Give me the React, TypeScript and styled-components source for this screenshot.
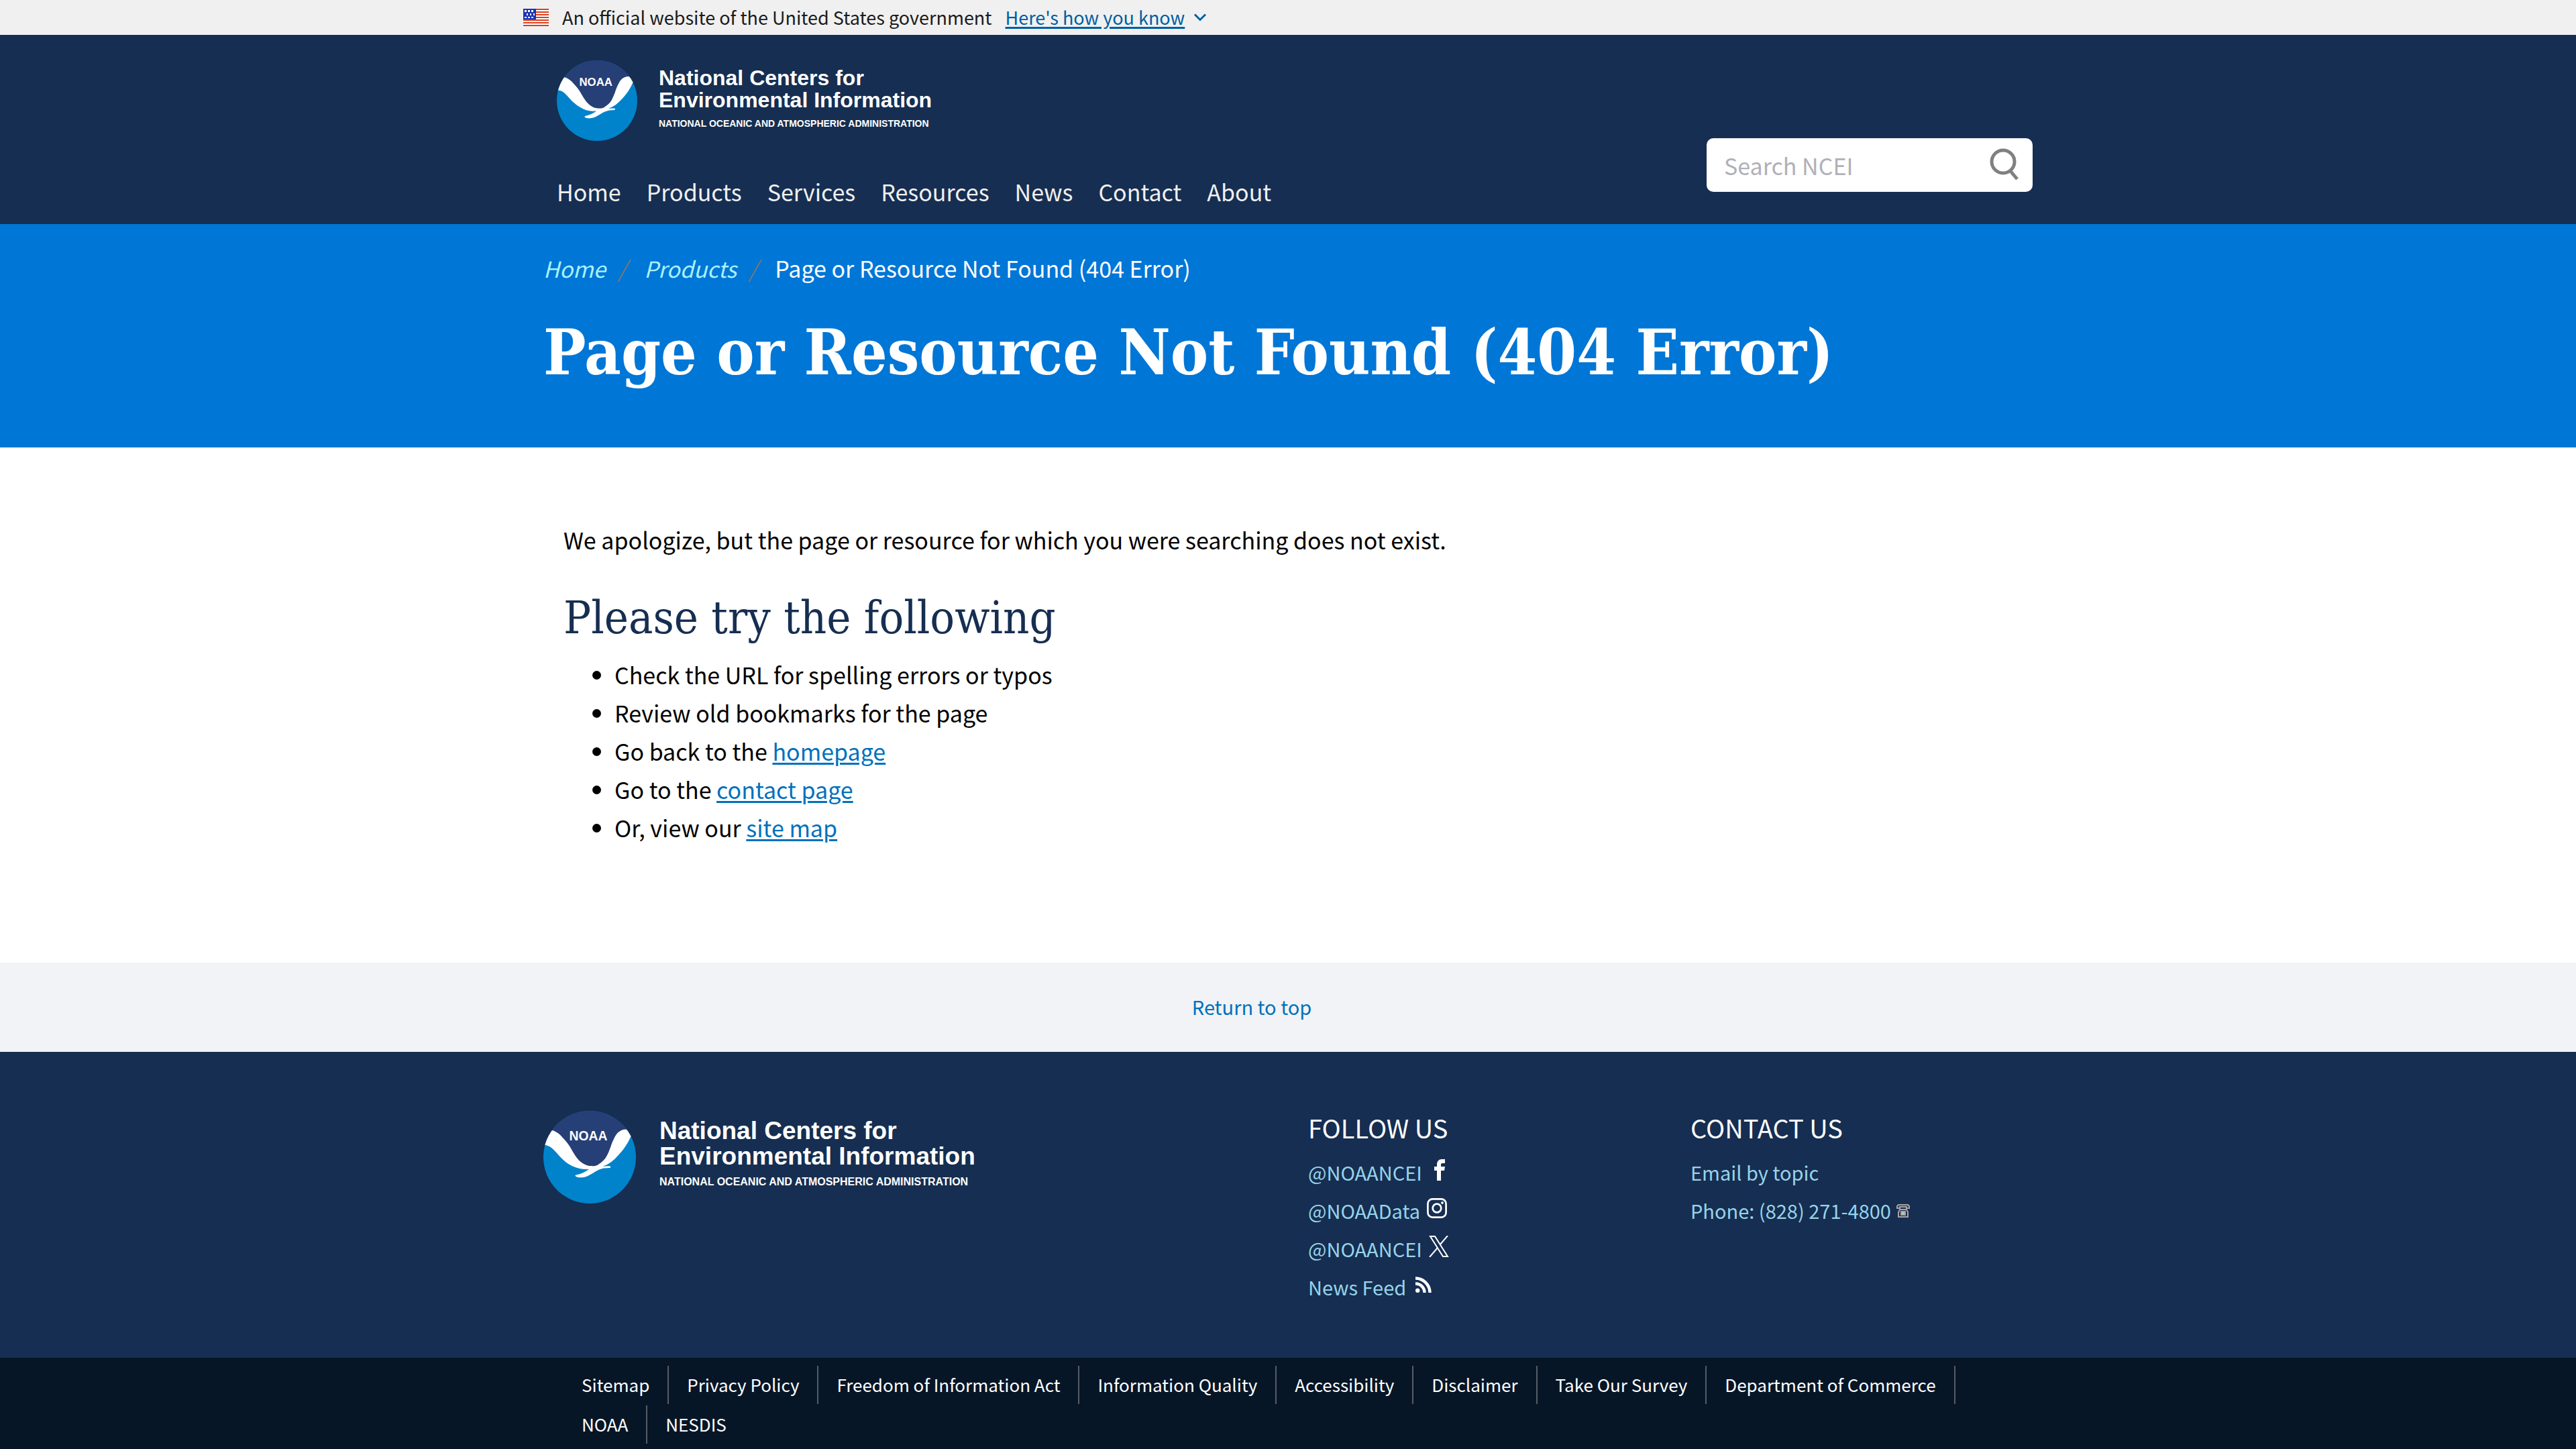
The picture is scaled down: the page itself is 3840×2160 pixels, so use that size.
import React from "react";
import styled, { createGlobalStyle } from "styled-components";

const SANS = `"Noto Sans CJK SC", "Noto Sans", sans-serif`;
const SERIF = `"DejaVu Serif Condensed", "DejaVu Serif", serif`;
const LOGO = `"Liberation Sans", Arial, sans-serif`;

const GlobalStyle = createGlobalStyle`
  *, *::before, *::after { box-sizing: border-box; }
  body {
    margin: 0;
    background: #fff;
    color: #000;
    font-family: ${SANS};
    font-size: 34px;
    line-height: 57px;
  }
  h1, h2, h3, p, ul, ol { margin: 0; padding: 0; }
`;

const Container = styled.div`
  width: 100%;
  max-width: 2280px;
  margin: 0 auto;
  padding: 0 30px;
`;

const GovBanner = styled.section`
  background: #f0f0f0;
  color: #1b1b1b;
`;
const GovInner = styled(Container)`
  display: flex;
  align-items: center;
  padding: 0;
  font-size: 27px;
  line-height: 52px;
`;
const Flag = styled.svg`
  width: 38px;
  height: 26px;
  margin-right: 20px;
`;
const GovButton = styled.button`
  display: flex;
  align-items: center;
  gap: 13px;
  margin: 0 0 0 20px;
  padding: 0;
  border: 0;
  background: none;
  color: #005ea2;
  font: inherit;
  cursor: pointer;
`;
const Underlined = styled.span`
  text-decoration: underline;
  text-underline-offset: 3px;
  text-decoration-thickness: 3px;
`;

const Header = styled.header`
  background: #162e51;
  color: #fff;
`;
const HeaderInner = styled(Container)`
  display: flex;
  justify-content: space-between;
  align-items: flex-end;
  padding-top: 38px;
`;
const HeaderLeft = styled.div`
  padding: 0 0 20px 20px;
`;
const LogoLink = styled.a<{ $large?: boolean }>`
  display: inline-flex;
  align-items: flex-start;
  gap: ${(p) => (p.$large ? "35px" : "32px")};
  color: #fff;
  text-decoration: none;
  font-family: ${LOGO};
  vertical-align: top;
`;
const Emblem = styled.svg<{ $large?: boolean }>`
  width: ${(p) => (p.$large ? "138px" : "120px")};
  height: ${(p) => (p.$large ? "138px" : "120px")};
`;
const LogoText = styled.span<{ $large?: boolean }>`
  display: flex;
  flex-direction: column;
  padding-top: ${(p) => (p.$large ? "11px" : "10px")};
  font-weight: 700;
  font-size: ${(p) => (p.$large ? "37px" : "32px")};
  line-height: ${(p) => (p.$large ? "38px" : "33px")};
`;
const LogoSub = styled.span<{ $large?: boolean }>`
  margin-top: ${(p) => (p.$large ? "8px" : "7px")};
  font-size: ${(p) => (p.$large ? "16px" : "14px")};
  line-height: 22px;
`;
const Nav = styled.ul`
  display: flex;
  gap: 38px;
  margin-top: 47px;
  list-style: none;
`;
const NavLink = styled.a`
  color: #f0f0f0;
  text-decoration: none;
`;
const SearchForm = styled.form`
  display: flex;
  align-items: center;
  width: 486px;
  height: 80px;
  margin-bottom: 48px;
  padding: 0 20px 0 26px;
  border-radius: 10px;
  background: #fff;
`;
const SearchInput = styled.input`
  flex: 1;
  min-width: 0;
  padding: 0;
  border: 0;
  outline: 0;
  background: none;
  color: #1b1b1b;
  font: inherit;
  &::placeholder { color: #b0b0b8; opacity: 1; }
`;
const SearchButton = styled.button`
  display: flex;
  padding: 0;
  border: 0;
  background: none;
  cursor: pointer;
`;

const Hero = styled.section`
  padding: 37px 0 82px;
  background: #0076d6;
  color: #fff;
`;
const Crumbs = styled.ol`
  display: flex;
  list-style: none;
`;
const Crumb = styled.li`
  &:not(:last-child)::after {
    content: "/";
    margin: 0 26px 0 18px;
    color: #71767a;
    font-style: italic;
  }
`;
const CrumbLink = styled.a`
  color: #a8f2ff;
  font-size: 33px;
  font-style: italic;
  text-decoration: none;
`;
const Title = styled.h1`
  margin-top: 36px;
  font-family: ${SERIF};
  font-size: 94px;
  line-height: 120px;
  font-weight: 700;
`;

const Body = styled(Container)`
  padding: 109px 60px 173px;
`;
const Subtitle = styled.h2`
  margin: 48px 0 16px;
  color: #162e51;
  font-family: ${SERIF};
  font-size: 68px;
  line-height: 80px;
  font-weight: 400;
`;
const Tips = styled.ul`
  padding-left: 76px;
`;
const TextLink = styled.a`
  color: #0071bc;
  text-decoration: underline;
  text-underline-offset: 3px;
  text-decoration-thickness: 3px;
`;

const ReturnBand = styled.div`
  padding: 37px 0 39px;
  background: #f1f3f6;
  font-size: 29px;
`;
const ReturnInner = styled(Container)`
  padding-right: 138px;
  text-align: center;
`;
const ReturnLink = styled.a`
  color: #0071bc;
  text-decoration: none;
`;

const Footer = styled.footer`
  background: #162e51;
  color: #fff;
`;
const FooterGrid = styled(Container)`
  display: grid;
  grid-template-columns: 1140px 570px 1fr;
  padding-top: 84px;
  padding-bottom: 77px;
`;
const FooterBrand = styled.div`
  padding-top: 4px;
`;
const FooterHeading = styled.h3`
  margin-bottom: 10px;
  font-size: 38px;
  line-height: 57px;
  font-weight: 400;
`;
const FooterList = styled.ul`
  list-style: none;
  font-size: 29px;
`;
const FooterItem = styled.li<{ $gap?: number; $lift?: number }>`
  display: flex;
  align-items: center;
  gap: ${(p) => p.$gap ?? 8}px;
  height: 57px;
  & > svg { margin-bottom: ${(p) => p.$lift ?? 8}px; }
`;
const FooterLink = styled.a`
  color: #97d4ea;
  text-decoration: none;
`;

const Legal = styled.div`
  padding: 12px 0 8px;
  background: #071627;
`;
const LegalList = styled.ul`
  display: flex;
  flex-wrap: wrap;
  row-gap: 2px;
  width: 100%;
  max-width: 2160px;
  margin: 0 auto;
  list-style: none;
  font-size: 26px;
`;
const LegalItem = styled.li`
  height: 57px;
  padding: 0 27px;
  line-height: 55px;
  border-right: 2px solid #565c65;
  &:last-child { border-right: 0; }
`;
const LegalLink = styled.a`
  color: #fff;
  text-decoration: none;
`;

function Logo({ large, id }: { large?: boolean; id: string }) {
  return (
    <LogoLink href="#" $large={large}>
      <Emblem $large={large} viewBox="0 0 100 100" aria-hidden="true">
        <clipPath id={id}><circle cx="50" cy="50" r="50" /></clipPath>
        <g clipPath={`url(#${id})`}>
          <rect width="100" height="100" fill="#0083cb" />
          <path d="M0 0H100V24L60 62H45L0 28Z" fill="#263f77" />
          <path
            fill="#fff"
            d="M10 21C13 22 16 24 18.3 26C22 30 25 33 28.3 38C33 46 36 52 41.7 56C46 59 49 59.500 52.300 59.500C55 60 57 59 58.300 58.700C64 55 66 53 68.300 49C72 42 73 37 75 32.600C78 26 80 23 83.300 21.500C85 20.500 87 20 89.300 20L97 24L94.300 28.300C90 37 86 43 78.300 50.700C74 55 70 58 64 59.800L71.500 59.600C73 60 72.700 61.600 71.700 61.600L65 62C61 63 59 64 56.700 65.200C52 68 48 71 43.300 71.700C40 72 37 72 35.500 71C34 70 34 69.500 36 69C41 68 45 66 49.300 63C43 63.500 38 62.500 33 60.400C28 58 25 56 21.700 53C16 48 13 43 8.300 39.500C6 38 4 37 0 37L0 24Z"
          />
          <text x="48.500" y="32" textAnchor="middle" fill="#fff" fontFamily='"Liberation Sans Narrow", "Liberation Sans", sans-serif' fontWeight="700" fontSize="14">NOAA</text>
        </g>
      </Emblem>
      <LogoText $large={large}>
        <span>National Centers for</span>
        <span>Environmental Information</span>
        <LogoSub $large={large}>NATIONAL OCEANIC AND ATMOSPHERIC ADMINISTRATION</LogoSub>
      </LogoText>
    </LogoLink>
  );
}

const FlagIcon = () => (
  <Flag viewBox="0 0 38 26" aria-hidden="true">
    <rect width="38" height="26" fill="#fff" />
    {[0, 1, 2, 3, 4, 5, 6].map((i) => (
      <rect key={i} y={i * 4} width="38" height="2" fill="#db3e1f" />
    ))}
    <rect width="19" height="16" fill="#1e33b1" />
    {[2, 7, 12].map((x) => (
      <g key={x} fill="#fff">
        <rect x={x} y="2" width="3" height="3" />
        <rect x={x + 3} y="7" width="2" height="3" />
        <rect x={x} y="12" width="3" height="2" />
      </g>
    ))}
  </Flag>
);

const NAV = ["Home", "Products", "Services", "Resources", "News", "Contact", "About"];
const LEGAL = [
  "Sitemap", "Privacy Policy", "Freedom of Information Act", "Information Quality",
  "Accessibility", "Disclaimer", "Take Our Survey", "Department of Commerce", "NOAA", "NESDIS",
];

export default function App() {
  return (
    <>
      <GlobalStyle />
      <GovBanner>
        <GovInner>
          <FlagIcon />
          <span>An official website of the United States government</span>
          <GovButton type="button">
            <Underlined>Here's how you know</Underlined>
            <svg width="20" height="12" viewBox="0 0 20 12" fill="none" stroke="#005ea2" strokeWidth="3" aria-hidden="true">
              <path d="M2 1.500L10 9.500L18 1.500" />
            </svg>
          </GovButton>
        </GovInner>
      </GovBanner>

      <Header>
        <HeaderInner>
          <HeaderLeft>
            <Logo id="emblem-header" />
            <nav aria-label="Main">
              <Nav>
                {NAV.map((n) => (
                  <li key={n}><NavLink href="#">{n}</NavLink></li>
                ))}
              </Nav>
            </nav>
          </HeaderLeft>
          <SearchForm role="search">
            <SearchInput type="search" aria-label="Search NCEI" placeholder="Search NCEI" />
            <SearchButton type="button" aria-label="Search">
              <svg width="44" height="50" viewBox="0 0 44 50" fill="none" stroke="#808080" strokeWidth="5" aria-hidden="true">
                <circle cx="20" cy="20" r="17" />
                <path d="M30 33L41 46" />
              </svg>
            </SearchButton>
          </SearchForm>
        </HeaderInner>
      </Header>

      <Hero>
        <Container>
          <nav aria-label="Breadcrumb">
            <Crumbs>
              <Crumb><CrumbLink href="#">Home</CrumbLink></Crumb>
              <Crumb><CrumbLink href="#">Products</CrumbLink></Crumb>
              <Crumb aria-current="page">Page or Resource Not Found (404 Error)</Crumb>
            </Crumbs>
          </nav>
          <Title>Page or Resource Not Found (404 Error)</Title>
        </Container>
      </Hero>

      <main>
        <Body>
          <p>We apologize, but the page or resource for which you were searching does not exist.</p>
          <Subtitle>Please try the following</Subtitle>
          <Tips>
            <li>Check the URL for spelling errors or typos</li>
            <li>Review old bookmarks for the page</li>
            <li>Go back to the <TextLink href="#">homepage</TextLink></li>
            <li>Go to the <TextLink href="#">contact page</TextLink></li>
            <li>Or, view our <TextLink href="#">site map</TextLink></li>
          </Tips>
        </Body>
      </main>

      <ReturnBand>
        <ReturnInner><ReturnLink href="#">Return to top</ReturnLink></ReturnInner>
      </ReturnBand>

      <Footer>
        <FooterGrid>
          <FooterBrand><Logo id="emblem-footer" large /></FooterBrand>
          <section>
            <FooterHeading>FOLLOW US</FooterHeading>
            <FooterList>
              <FooterItem $gap={18}>
                <FooterLink href="#">@NOAANCEI</FooterLink>
                <svg width="16" height="32" viewBox="0 0 16 32" fill="#fff" aria-hidden="true">
                  <path d="M4 32V17H0V11H4V8C4 3 7 0 11 0H16V6H13C11 6 10 6.500 10 8V11H16L15 17H10V32Z" />
                </svg>
              </FooterItem>
              <FooterItem $gap={10}>
                <FooterLink href="#">@NOAAData</FooterLink>
                <svg width="30" height="30" viewBox="0 0 30 30" fill="none" stroke="#fff" strokeWidth="2.700" aria-hidden="true">
                  <rect x="1.400" y="1.400" width="27.200" height="27.200" rx="7" />
                  <circle cx="15" cy="15" r="6.300" />
                  <circle cx="23" cy="7" r="1.900" fill="#fff" stroke="none" />
                </svg>
              </FooterItem>
              <FooterItem $gap={10}>
                <FooterLink href="#">@NOAANCEI</FooterLink>
                <svg width="30" height="32" viewBox="0 0 30 32" fill="none" stroke="#fff" strokeWidth="2" aria-hidden="true">
                  <path d="M2 1H9L28 31H21Z" />
                  <path d="M28 0L16.500 13.500M13 18L1 32" />
                </svg>
              </FooterItem>
              <FooterItem $gap={14}>
                <FooterLink href="#">News Feed</FooterLink>
                <svg width="24" height="24" viewBox="0 0 24 24" fill="none" stroke="#fff" strokeWidth="4.500" aria-hidden="true">
                  <circle cx="3.200" cy="20.800" r="3.200" fill="#fff" stroke="none" />
                  <path d="M0 10.500A13.500 13.500 0 0 1 13.500 24M0 2.500A21.500 21.500 0 0 1 21.500 24" />
                </svg>
              </FooterItem>
            </FooterList>
          </section>
          <section>
            <FooterHeading>CONTACT US</FooterHeading>
            <FooterList>
              <FooterItem><FooterLink href="#">Email by topic</FooterLink></FooterItem>
              <FooterItem $lift={0}>
                <FooterLink href="#">Phone: (828) 271-4800</FooterLink>
                <svg width="20" height="20" viewBox="0 0 20 20" fill="none" stroke="#a8a3a3" strokeWidth="2" aria-hidden="true">
                  <path d="M1 6V3L3 1H17L19 3V6H15V4H5V6Z" />
                  <path d="M5 8H15L17 12V19H3V12Z" />
                  <rect x="7" y="11" width="6" height="5" fill="#c4c0c0" />
                </svg>
              </FooterItem>
            </FooterList>
          </section>
        </FooterGrid>
        <Legal>
          <LegalList>
            {LEGAL.map((n) => (
              <LegalItem key={n}><LegalLink href="#">{n}</LegalLink></LegalItem>
            ))}
          </LegalList>
        </Legal>
      </Footer>
    </>
  );
}
